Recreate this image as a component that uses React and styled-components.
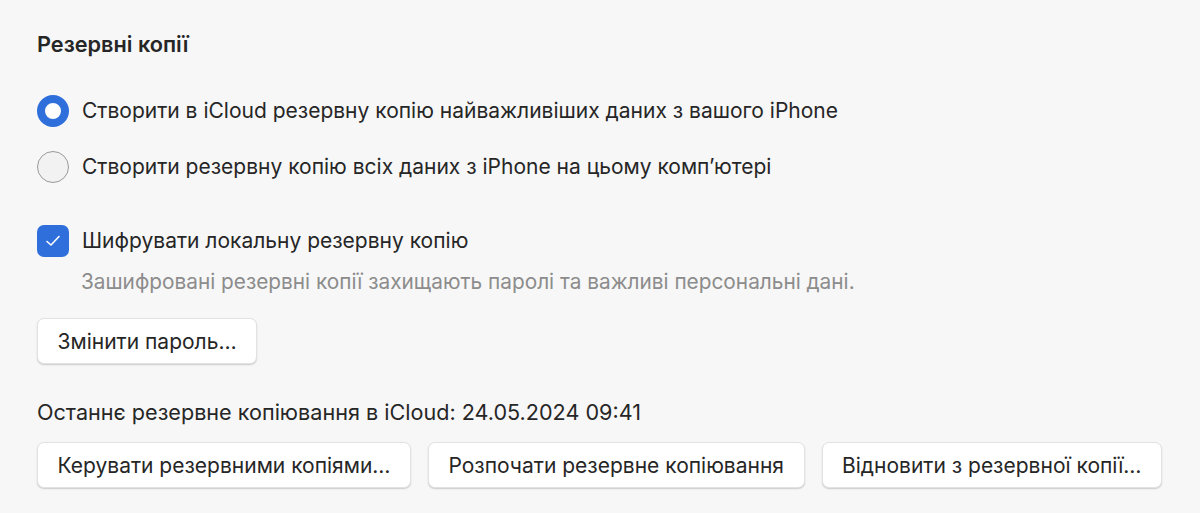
import React, { useState } from 'react';
import styled, { createGlobalStyle } from 'styled-components';

const GlobalStyle = createGlobalStyle`
  html, body {
    margin: 0;
    background: #f7f7f7;
  }
  body {
    font-family: Inter, "Noto Sans", sans-serif;
    color: #262626;
    -webkit-font-smoothing: antialiased;
  }
`;

const Page = styled.div`
  width: 1200px;
  height: 513px;
  box-sizing: border-box;
  padding: 30px 37px 0;
  display: flex;
  flex-direction: column;
`;

const Title = styled.h2`
  margin: 0;
  font-size: 21.7px;
  font-weight: 600;
  line-height: 28px;
`;

const Options = styled.div`
  margin-top: 37px;
  display: flex;
  flex-direction: column;
  gap: 24px;
`;

const OptionRow = styled.label`
  display: flex;
  align-items: center;
  gap: 13px;
  font-size: 21px;
  line-height: 32px;
  cursor: pointer;
`;

const RadioCircle = styled.span`
  width: 32px;
  height: 32px;
  flex: none;
  box-sizing: border-box;
  border-radius: 50%;
  border: ${(p) => (p.$on ? '8px solid #2f6fdc' : '1.5px solid #9a9a9a')};
  background: ${(p) => (p.$on ? '#ffffff' : '#f2f2f2')};
`;

const CheckBox = styled.span`
  width: 32px;
  height: 32px;
  flex: none;
  border-radius: 7px;
  background: #2f6fdc;
  display: flex;
  align-items: center;
  justify-content: center;
`;

const CheckSection = styled.div`
  margin-top: 42px;
  display: flex;
  flex-direction: column;
`;

const Hint = styled.p`
  margin: 11px 0 0 44px;
  font-size: 20.8px;
  line-height: 28px;
  color: #8c8c8c;
`;

const Button = styled.button`
  height: 46px;
  box-sizing: border-box;
  padding: 0 19.5px;
  border: 1px solid #e2e2e2;
  border-radius: 7px;
  background: #ffffff;
  box-shadow: 0 1px 1.5px rgba(0, 0, 0, 0.18);
  font-family: inherit;
  font-size: 21px;
  color: #262626;
  white-space: nowrap;
  cursor: pointer;
`;

const PasswordRow = styled.div`
  margin-top: 22px;
  display: flex;
`;

const Status = styled.p`
  margin: 34px 0 0;
  font-size: 21.6px;
  line-height: 28px;
`;

const ButtonRow = styled.div`
  margin-top: 16px;
  display: flex;
  gap: 17px;
`;

export default function App() {
  const [target, setTarget] = useState('icloud');
  const [encrypt, setEncrypt] = useState(true);

  return (
    <>
      <GlobalStyle />
      <Page>
        <Title>Резервні копії</Title>
        <Options>
          <OptionRow onClick={() => setTarget('icloud')}>
            <RadioCircle $on={target === 'icloud'} />
            Створити в iCloud резервну копію найважливіших даних з вашого iPhone
          </OptionRow>
          <OptionRow onClick={() => setTarget('local')}>
            <RadioCircle $on={target === 'local'} />
            Створити резервну копію всіх даних з iPhone на цьому комп’ютері
          </OptionRow>
        </Options>
        <CheckSection>
          <OptionRow onClick={() => setEncrypt(!encrypt)}>
            <CheckBox>
              {encrypt && (
                <svg width="20" height="20" viewBox="0 0 20 20" fill="none">
                  <path d="M4 10.5 L8 14 L16 5.5" stroke="#fff" strokeWidth="1.6" strokeLinecap="round" strokeLinejoin="round" />
                </svg>
              )}
            </CheckBox>
            Шифрувати локальну резервну копію
          </OptionRow>
          <Hint>Зашифровані резервні копії захищають паролі та важливі персональні дані.</Hint>
        </CheckSection>
        <PasswordRow>
          <Button>Змінити пароль…</Button>
        </PasswordRow>
        <Status>Останнє резервне копіювання в iCloud: 24.05.2024 09:41</Status>
        <ButtonRow>
          <Button>Керувати резервними копіями…</Button>
          <Button>Розпочати резервне копіювання</Button>
          <Button>Відновити з резервної копії…</Button>
        </ButtonRow>
      </Page>
    </>
  );
}
